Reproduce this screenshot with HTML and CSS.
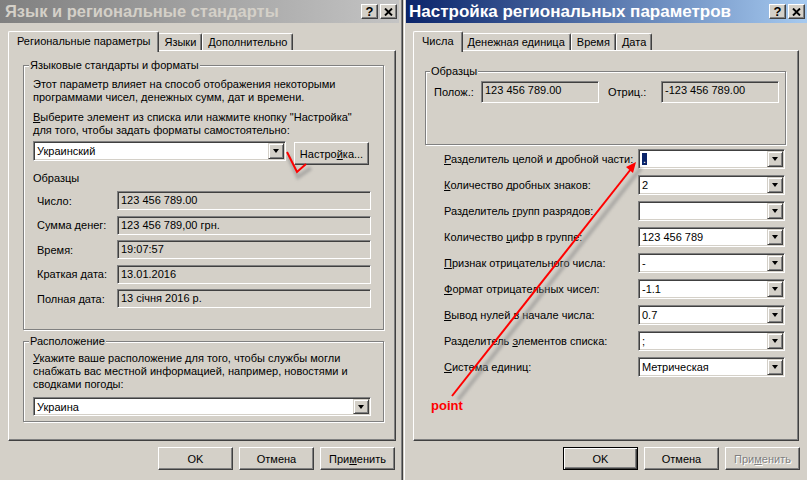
FILE: index.html
```html
<!DOCTYPE html>
<html lang="ru">
<head>
    <meta charset="UTF-8">
    <title>Язык и региональные стандарты</title>
    <link rel="stylesheet" href="styles.css">
</head>
<body>
<div class="desktop">

    <!-- окно 1: неактивное -->
    <div class="window win-left">
        <div class="titlebar">
            <span class="title">Язык и региональные стандарты</span>
            <div class="caption-btns">
                <span class="cbtn">?</span>
                <span class="cbtn"><svg width="9" height="8" viewBox="0 0 9 8"><path d="M1 0.5 L8 7.5 M8 0.5 L1 7.5" stroke="#000" stroke-width="1.9"/></svg></span>
            </div>
        </div>
        <div class="tabs">
            <div class="tab active">Региональные параметры</div>
            <div class="tab">Языки</div>
            <div class="tab">Дополнительно</div>
        </div>
        <div class="panel">
            <fieldset class="group formats">
                <legend>Языковые стандарты и форматы</legend>
                <p class="note">Этот параметр влияет на способ отображения некоторыми<br>программами чисел, денежных сумм, дат и времени.</p>
                <p class="note second"><u>В</u>ыберите элемент из списка или нажмите кнопку "Настройка"<br>для того, чтобы задать форматы самостоятельно:</p>
                <div class="locale-row">
                    <div class="combo locale-combo"><span class="value">Украинский</span><span class="drop"></span></div>
                    <div class="btn setup-btn">Настро<u>й</u>ка...</div>
                </div>
                <div class="samples-title">Образцы</div>
                <div class="samples">
                    <span>Число:</span><div class="field">123 456 789.00</div>
                    <span>Сумма денег:</span><div class="field">123 456 789,00 грн.</div>
                    <span>Время:</span><div class="field">19:07:57</div>
                    <span>Краткая дата:</span><div class="field">13.01.2016</div>
                    <span>Полная дата:</span><div class="field">13 січня 2016 р.</div>
                </div>
            </fieldset>
            <fieldset class="group location">
                <legend>Расположение</legend>
                <p class="note"><u>У</u>кажите ваше расположение для того, чтобы службы могли<br>снабжать вас местной информацией, например, новостями и<br>сводками погоды:</p>
                <div class="combo country-combo"><span class="value">Украина</span><span class="drop"></span></div>
            </fieldset>
        </div>
        <div class="buttons">
            <div class="btn">OK</div>
            <div class="btn">Отмена</div>
            <div class="btn">При<u>м</u>енить</div>
        </div>
    </div>

    <!-- окно 2: активное -->
    <div class="window win-right">
        <div class="titlebar">
            <span class="title">Настройка региональных параметров</span>
            <div class="caption-btns">
                <span class="cbtn">?</span>
                <span class="cbtn"><svg width="9" height="8" viewBox="0 0 9 8"><path d="M1 0.5 L8 7.5 M8 0.5 L1 7.5" stroke="#000" stroke-width="1.9"/></svg></span>
            </div>
        </div>
        <div class="tabs">
            <div class="tab active">Числа</div>
            <div class="tab">Денежная единица</div>
            <div class="tab">Время</div>
            <div class="tab">Дата</div>
        </div>
        <div class="panel">
            <fieldset class="group examples">
                <legend>Образцы</legend>
                <div class="example-row">
                    <span class="ex-label">Полож.:</span>
                    <div class="field ex-field">123 456 789.00</div>
                    <span class="ex-label neg">Отриц.:</span>
                    <div class="field ex-field">-123 456 789.00</div>
                </div>
            </fieldset>
            <div class="settings">
                <span><u>Р</u>азделитель целой и дробной части:</span>
                <div class="combo"><span class="value"><span class="sel">.</span></span><span class="drop"></span></div>
                <span><u>К</u>оличество дробных знаков:</span>
                <div class="combo"><span class="value">2</span><span class="drop"></span></div>
                <span>Разделитель <u>г</u>рупп разрядов:</span>
                <div class="combo"><span class="value"></span><span class="drop"></span></div>
                <span>Количество <u>ц</u>ифр в группе:</span>
                <div class="combo"><span class="value">123 456 789</span><span class="drop"></span></div>
                <span><u>П</u>ризнак отрицательного числа:</span>
                <div class="combo"><span class="value">-</span><span class="drop"></span></div>
                <span><u>Ф</u>ормат отрицательных чисел:</span>
                <div class="combo"><span class="value">-1.1</span><span class="drop"></span></div>
                <span><u>В</u>ывод нулей в начале числа:</span>
                <div class="combo"><span class="value">0.7</span><span class="drop"></span></div>
                <span>Разделитель <u>э</u>лементов списка:</span>
                <div class="combo"><span class="value">;</span><span class="drop"></span></div>
                <span><u>С</u>истема единиц:</span>
                <div class="combo"><span class="value">Метрическая</span><span class="drop"></span></div>
            </div>
        </div>
        <div class="buttons">
            <div class="btn default">OK</div>
            <div class="btn">Отмена</div>
            <div class="btn disabled">При<u>м</u>енить</div>
        </div>
    </div>
</div>

<!-- пометки поверх скриншота -->
<svg class="marks" width="807" height="480" viewBox="0 0 807 480">
    <defs>
        <filter id="soft" x="-20%" y="-20%" width="140%" height="140%">
            <feGaussianBlur stdDeviation="1.6"/>
        </filter>
    </defs>
    <g filter="url(#soft)" opacity="0.55">
        <path d="M288 156 L298 177 L311 168" stroke="#8a8a8a" stroke-width="4" fill="none"/>
        <path d="M458 400 L641 168" stroke="#8a8a8a" stroke-width="4" fill="none"/>
    </g>
    <path d="M287 152 L297 172 L306 164" stroke="#ff0000" stroke-width="2" fill="none"/>
    <path d="M452 396 L631 169" stroke="#ff0000" stroke-width="2" fill="none"/>
    <polygon points="636,162 633,173 626,167" fill="#ff0000"/>
</svg>
<div class="point-label">point</div>
</body>
</html>
```

FILE: styles.css
```css
* {
    box-sizing: border-box;
}

body {
    margin: 0;
    width: 807px;
    height: 480px;
    overflow: hidden;
    position: relative;
    background: #d4d0c8;
    font-family: 'Liberation Sans', Arial, sans-serif;
    font-size: 11px;
    color: #000;
}

.desktop {
    display: flex;
    height: 480px;
}

.window {
    height: 480px;
    background: #d4d0c8;
    display: flex;
    flex-direction: column;
}

.win-left {
    width: 403px;
    border-right: 1px solid #404040;
    box-shadow: inset -1px 0 0 #808080;
    padding-right: 3px;
}

.win-right {
    width: 404px;
    border-left: 1px solid #d4d0c8;
    box-shadow: inset 1px 0 0 #fff;
    padding-left: 2px;
}

/* заголовок окна */
.titlebar {
    height: 23px;
    display: flex;
    align-items: center;
    justify-content: space-between;
    padding: 0 2px 0 5px;
    font-size: 17px;
    font-weight: bold;
    white-space: nowrap;
}

.win-left .titlebar {
    background: linear-gradient(to right, #808080, #c4c4c4);
    color: #d4d0c8;
    font-size: 16.5px;
}

.win-right .titlebar {
    background: linear-gradient(to right, #0a246a, #a6caf0);
    color: #fff;
    padding-left: 3px;
}

.caption-btns {
    display: flex;
    gap: 2px;
}

.cbtn {
    width: 17px;
    height: 15px;
    background: #d4d0c8;
    border: 1px solid;
    border-color: #fff #404040 #404040 #fff;
    box-shadow: inset -1px -1px 0 #808080;
    display: flex;
    align-items: center;
    justify-content: center;
    color: #000;
    font-size: 13px;
    font-weight: bold;
    line-height: 1;
}

/* вкладки */
.tabs {
    display: flex;
    align-items: flex-end;
    height: 19px;
    margin: 8px 0 0 8px;
    padding-left: 2px;
    position: relative;
    z-index: 1;
}

.win-right .tabs {
    margin-left: 7px;
}

.tab {
    height: 17px;
    padding: 0 5px;
    line-height: 16px;
    border: 1px solid;
    border-bottom: none;
    border-color: #fff #404040 #fff #fff;
    box-shadow: inset -1px 0 0 #808080;
    border-radius: 2px 2px 0 0;
    background: #d4d0c8;
    white-space: nowrap;
}

.tab.active {
    height: 21px;
    margin: 0 -1px -2px -2px;
    padding: 0 8px;
    line-height: 19px;
    position: relative;
    z-index: 2;
}

.panel {
    width: 388px;
    height: 391px;
    margin-left: 8px;
    padding: 8px 0 0 14px;
    border: 1px solid;
    border-color: #fff #404040 #404040 #fff;
    box-shadow: inset -1px -1px 0 #808080;
}

.win-right .panel {
    width: 386px;
    margin-left: 7px;
    padding: 14px 0 0 11px;
}

/* рамки групп */
.group {
    margin: 0;
    width: 361px;
    border: 1px solid #808080;
    box-shadow: inset 1px 1px 0 #fff, 1px 1px 0 #fff;
    padding: 6px 12px 0 9px;
}

.group legend {
    padding: 0 1px;
    margin-left: -4px;
    line-height: 13px;
    background: #d4d0c8;
}

.note {
    margin: 0;
    line-height: 13px;
    white-space: nowrap;
}

.note.second {
    margin-top: 7px;
}

.formats {
    height: 271px;
}

.location {
    margin-top: 5px;
    height: 87px;
    padding-top: 4px;
}

/* поля */
.field {
    height: 19px;
    line-height: 16px;
    padding-left: 3px;
    border: 1px solid;
    border-color: #808080 #fff #fff #808080;
    box-shadow: inset 1px 1px 0 #404040, inset -1px -1px 0 #d4d0c8;
    white-space: nowrap;
}

.combo {
    display: flex;
    height: 20px;
    padding: 1px;
    background: #fff;
    border: 1px solid;
    border-color: #808080 #fff #fff #808080;
    box-shadow: inset 1px 1px 0 #404040, inset -1px -1px 0 #d4d0c8;
}

.combo .value {
    flex: 1;
    padding-left: 2px;
    line-height: 16px;
    white-space: nowrap;
}

.combo .sel {
    background: #0a246a;
    color: #fff;
    padding: 0 1px;
}

.drop {
    width: 16px;
    height: 16px;
    background: #d4d0c8;
    border: 1px solid;
    border-color: #d4d0c8 #404040 #404040 #d4d0c8;
    box-shadow: inset 1px 1px 0 #fff, inset -1px -1px 0 #808080;
    display: flex;
    align-items: center;
    justify-content: center;
}

.drop::after {
    content: '';
    border-top: 4px solid #000;
    border-left: 3.5px solid transparent;
    border-right: 3.5px solid transparent;
}

.locale-row {
    display: flex;
    align-items: flex-start;
    gap: 8px;
    margin-top: 4px;
}

.locale-combo {
    width: 253px;
}

.setup-btn {
    width: 77px;
    height: 18px;
    margin-top: 1px;
}

.samples-title {
    margin-top: 7px;
    line-height: 13px;
}

.samples {
    display: grid;
    grid-template-columns: 80px 254px;
    row-gap: 5.5px;
    align-items: center;
    margin-top: 6px;
    padding-left: 4px;
}

.samples .field {
    background: #d4d0c8;
}

.country-combo {
    width: 338px;
    height: 19px;
    margin-top: 6px;
}

.country-combo .drop {
    height: 15px;
}

/* правое окно */
.examples {
    height: 80px;
    padding: 3px 0 0 8px;
}

.example-row {
    display: flex;
    align-items: center;
}

.ex-label {
    width: 47px;
}

.ex-label.neg {
    width: 53px;
    margin-left: 9px;
}

.ex-field {
    width: 118px;
    height: 22px;
    line-height: 17px;
}

.settings {
    display: grid;
    grid-template-columns: 194px 147px;
    row-gap: 6px;
    align-items: center;
    margin: 4px 0 0 19px;
}

.settings span {
    white-space: nowrap;
}

/* кнопки */
.buttons {
    display: flex;
    justify-content: flex-end;
    gap: 6px;
    margin-top: 6px;
    padding-right: 4px;
}

.win-right .buttons {
    padding-right: 7px;
}

.btn {
    width: 75px;
    height: 23px;
    display: flex;
    align-items: center;
    justify-content: center;
    background: #d4d0c8;
    border: 1px solid;
    border-color: #fff #404040 #404040 #fff;
    box-shadow: inset -1px -1px 0 #808080;
    white-space: nowrap;
}

.btn.default {
    border: 1px solid #000;
    box-shadow: inset 1px 1px 0 #fff, inset -1px -1px 0 #404040, inset -2px -2px 0 #808080;
}

.btn.disabled {
    color: #808080;
    text-shadow: 1px 1px 0 #fff;
}

/* пометки */
.marks {
    position: absolute;
    left: 0;
    top: 0;
    pointer-events: none;
}

.point-label {
    position: absolute;
    left: 431px;
    top: 398px;
    color: #ff0000;
    font-weight: bold;
    font-size: 13px;
}
```
